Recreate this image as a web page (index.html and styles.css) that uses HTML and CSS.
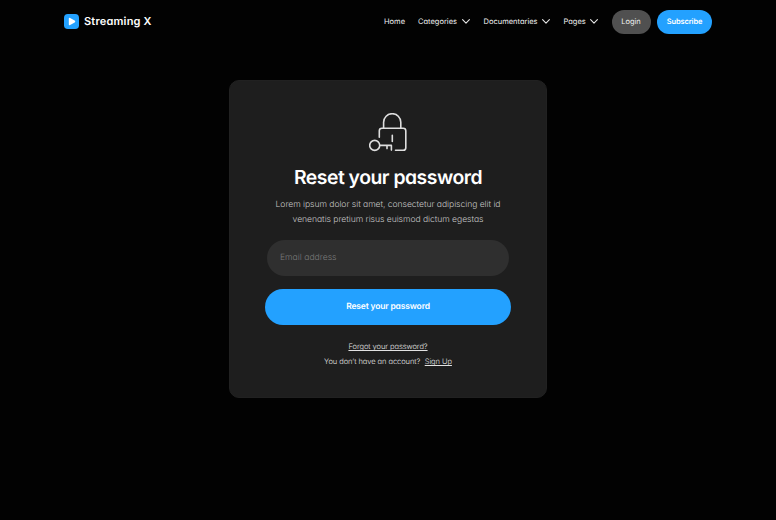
FILE: index.html
```
<!DOCTYPE html>
<html lang="en">
<head>
<meta charset="utf-8">
<title>Streaming X</title>
<link rel="stylesheet" href="styles.css">
</head>
<body>
<header class="header">
  <a class="brand">
    <svg class="brand-mark" viewBox="0 0 15 15"><rect width="15" height="15" rx="3.8" fill="#23a1ff"/><path d="M4.8 4.8v5.4q0 1.5 1.3.8l4.6-2.6q1.2-.9 0-1.8L6.1 4q-1.3-.7-1.3.8Z" fill="#fff"/></svg>
    <span class="brand-name">Streaming X</span>
  </a>
  <nav class="nav">
    <a class="link home">Home</a>
    <a class="link categories">Categories</a>
    <svg class="chevron" viewBox="0 0 8 5"><path d="M.6.7 4 4.1 7.4.7"/></svg>
    <a class="link documentaries">Documentaries</a>
    <svg class="chevron" viewBox="0 0 8 5"><path d="M.6.7 4 4.1 7.4.7"/></svg>
    <a class="link pages">Pages</a>
    <svg class="chevron" viewBox="0 0 8 5"><path d="M.6.7 4 4.1 7.4.7"/></svg>
    <a class="pill login">Login</a>
    <a class="pill subscribe">Subscribe</a>
  </nav>
</header>
<main class="card">
  <svg class="lock" viewBox="0 0 38 39">
    <path d="M14.6 15.2V9.3a8.6 8.6 0 0 1 17.2 0v5.9M10.3 24.2v-6.4q0-2.6 2.6-2.6h21.3q2.6 0 2.6 2.6v16.9q0 2.6-2.6 2.6h-7.7M23.3 22.2v6.2M11 32.4h11.4v4.7M18 32.8v2.8"/>
    <circle cx="5.7" cy="32.4" r="5"/>
  </svg>
  <h1 class="title">Reset your password</h1>
  <p class="intro">Lorem ipsum dolor sit amet, consectetur adipiscing elit id<br>venenatis pretium risus euismod dictum egestas</p>
  <div class="field">Email address</div>
  <div class="submit">Reset your password</div>
  <p class="help"><a class="forgot">Forgot your password?</a></p>
  <p class="help signup-row"><span>You don’t have an account?</span><a class="signup">Sign Up</a></p>
</main>
</body>
</html>
```
FILE: styles.css
```
* { box-sizing: border-box; }
body {
  margin: 0;
  height: 520px;
  background: #020202;
  color: #fff;
  font-family: Inter, "Liberation Sans", sans-serif;
  font-feature-settings: "cv11";
  text-rendering: geometricPrecision;
  overflow: hidden;
}
.header {
  height: 80.4px;
  padding: 9.7px 64px 0;
  display: flex;
  justify-content: space-between;
  align-items: flex-start;
}
.brand { display: flex; align-items: center; gap: 5px; height: 23px; }
.brand-mark { width: 15px; height: 15px; }
.brand-name { font-size: 11px; font-weight: 600; letter-spacing: .19px; white-space: nowrap; }
.nav { display: flex; align-items: center; height: 24px; font-size: 7.5px; }
.link { color: #f0f0f0; white-space: nowrap; line-height: 10px; }
.home { width: 34px; }
.categories { width: 44px; }
.documentaries { width: 58.5px; }
.pages { width: 26.5px; }
.chevron { width: 8px; height: 5px; margin-right: 13.5px; fill: none; stroke: #e6e6e6; stroke-width: 1.1; stroke-linecap: round; stroke-linejoin: round; }
.pill { height: 24px; border-radius: 12px; display: flex; align-items: center; justify-content: center; }
.login { width: 39px; background: #505050; color: #eee; }
.subscribe { width: 55px; margin-left: 6.5px; background: #23a1ff; font-weight: 600; letter-spacing: -.15px; }
.card {
  width: 318px;
  height: 318px;
  margin: 0 auto;
  padding-top: 31.9px;
  border-radius: 10px;
  border: 1px solid #212121;
  background: #1e1e1e;
  display: flex;
  flex-direction: column;
  align-items: center;
}
.lock { width: 38px; height: 39px; fill: none; stroke: #dedede; stroke-width: 1.6; stroke-linecap: round; stroke-linejoin: round; flex: none; }
.title { margin: 11.7px 0 0; font-size: 19.4px; line-height: 26px; font-weight: 600; letter-spacing: -.5px; white-space: nowrap; }
.intro { margin: 8px 0 0; font-size: 8.6px; line-height: 15px; letter-spacing: -.055px; color: #c4c4c4; text-align: center; white-space: nowrap; font-weight: 300; }
.field { width: 242px; height: 36px; margin-top: 12px; border-radius: 18px; background: #2f2f2f; color: #7a7a7a; font-size: 8.6px; font-weight: 300; line-height: 36px; padding-left: 13px; flex: none; }
.submit { width: 246px; height: 36px; margin-top: 12.6px; border-radius: 18px; background: #23a1ff; font-size: 8.5px; font-weight: 600; letter-spacing: -.16px; line-height: 37px; text-align: center; flex: none; }
.help { margin: 14.1px 0 0; font-size: 7.5px; line-height: 15px; letter-spacing: -.05px; font-weight: 300; color: #e2e2e2; white-space: nowrap; }
.signup-row { margin-top: 0; display: flex; gap: 4.5px; }
.forgot, .signup { text-decoration: underline; text-decoration-thickness: .7px; text-underline-offset: .8px; text-decoration-skip-ink: none; }
```
